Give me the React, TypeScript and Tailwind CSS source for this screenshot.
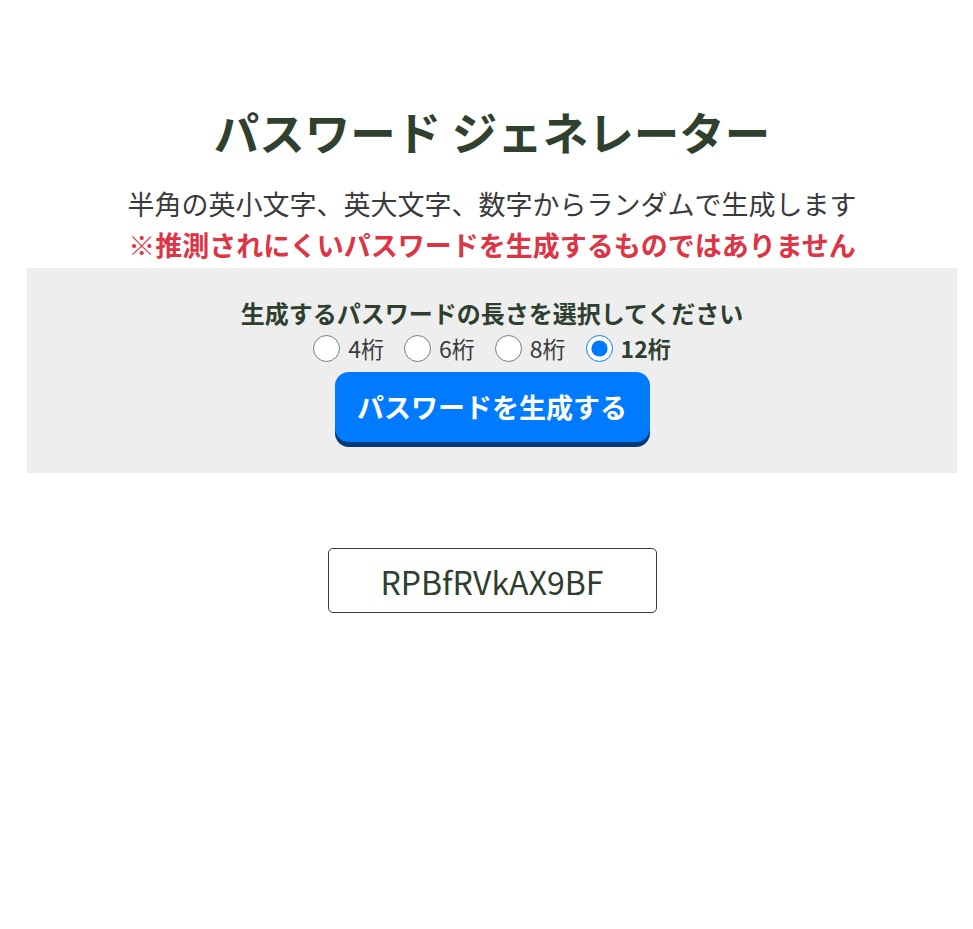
import { useState } from "react";

const lengths = [4, 6, 8, 12];

export default function App() {
  const [len, setLen] = useState(12);
  const [password] = useState("RPBfRVkAX9BF");

  return (
    <div
      className="min-h-screen bg-white text-[#2f3f2f]"
      style={{ fontFamily: '"Noto Sans CJK JP", "Noto Sans", sans-serif' }}
    >
      <div className="ml-[27px] w-[930px] pt-[98px] flex flex-col items-center">
        <h1 className="text-[45.5px] font-bold leading-[67px] text-[#2f402f]">
          パスワード ジェネレーター
        </h1>
        <p className="mt-[18px] text-[27px] leading-[41px] text-[#3a3a3a]">
          半角の英小文字、英大文字、数字からランダムで生成します
        </p>
        <p className="text-[27px] leading-[41px] font-bold text-[#dc3545]">
          ※推測されにくいパスワードを生成するものではありません
        </p>

        {/* options */}
        <div className="mt-[3px] w-full bg-[#eeeeee] pt-[27px] pb-[31px] flex flex-col items-center">
          <p className="text-[24px] leading-[36px] font-bold text-[#2f3f2f]">
            生成するパスワードの長さを選択してください
          </p>
          <div className="flex items-center gap-[20px] text-[23px] leading-[34px]">
            {lengths.map((n) => (
              <label key={n} className="flex items-center gap-[8px] cursor-pointer">
                <input
                  type="radio"
                  name="len"
                  checked={len === n}
                  onChange={() => setLen(n)}
                  className="w-[27px] h-[27px] accent-[#007bff] m-0"
                />
                <span className={len === n ? "font-bold text-[#2f3f2f]" : "text-[#3a3a3a]"}>
                  {n}桁
                </span>
              </label>
            ))}
          </div>
          <button className="mt-[7px] w-[315px] h-[70px] rounded-[14px] bg-[#007bff] text-white text-[27px] font-bold shadow-[0_5px_0_#003a7a]">
            パスワードを生成する
          </button>
        </div>

        <div className="mt-[75px] w-[329px] h-[65px] border border-[#3a3a3a] rounded-[5px] flex items-center justify-center text-[32px] text-[#2f3f2f]">
          {password}
        </div>
      </div>
    </div>
  );
}
